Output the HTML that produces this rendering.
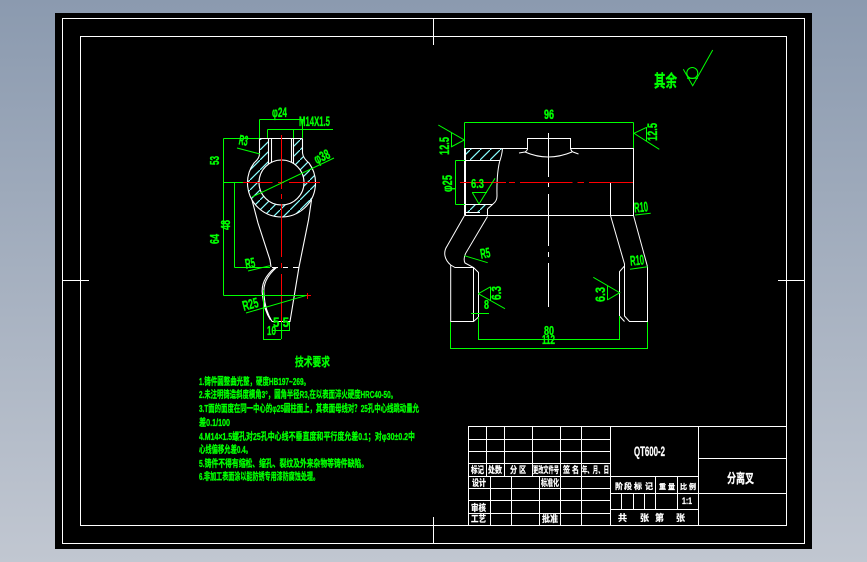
<!DOCTYPE html>
<html><head><meta charset="utf-8">
<style>
html,body{margin:0;padding:0;width:867px;height:562px;overflow:hidden;background:linear-gradient(to bottom,#8b9aaf 0%,#c1c7d1 100%)}
svg{position:absolute;left:0;top:0;display:block}
text{font-family:"Liberation Sans","Noto Sans CJK SC",sans-serif;font-weight:700}
.w path,.w line,.w rect,.w circle{stroke:#fff;fill:none}
.g path{stroke:#0f0;fill:none}
.r path{stroke:#f00;fill:none}
.gt text{fill:#0f0;stroke:#0f0;stroke-width:.3;font-size:10px}
.gl text{fill:#0f0;stroke:#0f0;stroke-width:.35;font-size:14px}
.wt text{fill:#fff;stroke:#fff;stroke-width:.25;font-size:9px}
</style></head><body>
<svg width="867" height="562" viewBox="0 0 867 562" xmlns="http://www.w3.org/2000/svg">
<defs>
<pattern id="h" patternUnits="userSpaceOnUse" width="10" height="10"><path d="M-2 12L12 -2" stroke="#8ff" stroke-width="1.2"/></pattern>
</defs>
<rect x="55" y="13" width="757" height="536" fill="#000"/>

<!-- frame -->
<g class="w" shape-rendering="crispEdges" stroke-width="1">
<rect x="62.5" y="18.5" width="742" height="525"/>
<rect x="80.5" y="36.5" width="706" height="489"/>
<path d="M62 280.5H89M778 280.5H805M433.5 18V45M433.5 517V544"/>
</g>

<!-- title block -->
<g class="w" shape-rendering="crispEdges">
<path d="M468.5 426.5H786.5M468.5 439.5H610.5M468.5 451.5H610.5M468.5 463.5H610.5M468.5 476.5H698.5M468.5 488.5H610.5M468.5 500.5H610.5M468.5 513.5H610.5M610.5 493.5H786.5M610.5 509.5H698.5M698.5 458.5H786.5"/>
<path d="M468.5 426V525M486.5 426V476M504.5 426V476M532.5 426V476M560.5 426V525M581.5 426V525M610.5 426V525M490.5 476V525M511.5 476V525M539.5 476V525M621.5 493V509M633.5 493V509M644.5 493V509M655.5 476V509M677.5 476V509M698.5 426V525"/>
</g>
<g class="wt">
<text x="471" y="473" textLength="13" lengthAdjust="spacingAndGlyphs">标记</text>
<text x="488" y="473" textLength="14" lengthAdjust="spacingAndGlyphs">处数</text>
<text x="510" y="473" textLength="16" lengthAdjust="spacingAndGlyphs">分 区</text>
<text x="533" y="473" textLength="26" lengthAdjust="spacingAndGlyphs">更改文件号</text>
<text x="563" y="473" textLength="16" lengthAdjust="spacingAndGlyphs">签 名</text>
<text x="582" y="473" textLength="27" lengthAdjust="spacingAndGlyphs">年、月、日</text>
<text x="472" y="486" textLength="14" lengthAdjust="spacingAndGlyphs">设计</text>
<text x="541" y="486" textLength="18" lengthAdjust="spacingAndGlyphs">标准化</text>
<text x="471" y="511" textLength="15" lengthAdjust="spacingAndGlyphs">审核</text>
<text x="471" y="522" textLength="15" lengthAdjust="spacingAndGlyphs">工艺</text>
<text x="542" y="522" textLength="16" lengthAdjust="spacingAndGlyphs">批准</text>
<text x="615 624 634 645" y="489" style="font-size:8px">阶段标记</text>
<text x="659 668" y="489" style="font-size:7px">重量</text>
<text x="680 689" y="489" style="font-size:7px">比例</text>
<text x="682" y="504" textLength="10" lengthAdjust="spacingAndGlyphs">1:1</text>
<text x="618" y="521">共</text><text x="640" y="521">张</text><text x="655" y="521">第</text><text x="676" y="521">张</text>
<text x="634" y="456" textLength="31" lengthAdjust="spacingAndGlyphs" style="font-size:14px">QT600-2</text>
<text x="727" y="483" textLength="27" lengthAdjust="spacingAndGlyphs" style="font-size:13px">分离叉</text>
</g>

<!-- technical text -->
<g class="gt">
<text x="295" y="366" textLength="35" lengthAdjust="spacingAndGlyphs" style="font-size:12px">技术要求</text>
<text x="199" y="385" textLength="111" lengthAdjust="spacingAndGlyphs">1.铸件圆整曲光整，硬度HB197~269。</text>
<text x="199" y="398" textLength="198" lengthAdjust="spacingAndGlyphs">2.未注明铸造斜度模角3°，圆角半径R3,在以表面淬火硬度HRC40-50。</text>
<text x="199" y="412" textLength="220" lengthAdjust="spacingAndGlyphs">3.T面的面度在同一中心的φ25圆柱面上，其表面母线对？25孔中心线跳动量允</text>
<text x="199" y="426" textLength="31" lengthAdjust="spacingAndGlyphs">差0.1/100</text>
<text x="199" y="440" textLength="216" lengthAdjust="spacingAndGlyphs">4.M14×1.5螺孔对25孔中心线不垂直度和平行度允差0.1；对φ30±0.2中</text>
<text x="199" y="453" textLength="53" lengthAdjust="spacingAndGlyphs">心线偏移允差0.4。</text>
<text x="199" y="467" textLength="169" lengthAdjust="spacingAndGlyphs">5.铸件不得有缩松、缩孔、裂纹及外来杂物等铸件缺陷。</text>
<text x="199" y="480" textLength="120" lengthAdjust="spacingAndGlyphs">6.非加工表面涂以能防锈专用漆防腐蚀处理。</text>
</g>

<!-- LEFT VIEW hatch -->
<path fill="url(#h)" fill-rule="evenodd" d="M259.5 138.5V153Q260 158 254 163A34 34 0 1 0 309 163Q303 158 302.5 153V138.5ZM268.5 138.5H294V164A22.5 22.5 0 1 1 268.5 164Z"/>
<!-- LEFT VIEW white -->
<g class="w" stroke-width="1.1">
<path d="M259.5 138.5H302.5M259.5 138.5V153Q260 158 254 163A34 34 0 1 0 309 163Q303 158 302.5 153V138.5"/>
<path d="M268.5 138.5V164M271.5 138.5V162M291.5 138.5V162M293.5 138.5V164"/>
<circle cx="281.5" cy="182.5" r="22.5"/>
<path d="M252 200L258 223L270 260L271 267M311.5 200L308.5 220L299 267L290 321.5H272"/>
<path d="M276.5 267.5Q262 280 264 295Q265 310 272 321.5M275 267.5Q260 280 262.5 295Q264 310 270.5 320"/>
<path d="M272 267.5H278M283 267.5H288M293 267.5H299"/>
</g>
<g class="r" stroke-width="1">
<path shape-rendering="crispEdges" d="M281.5 135V189M281.5 194V199M281.5 204V257M281.5 263V268M281.5 274V339M243 182.5H272.5M278 182.5H284M289 182.5H320M305 295.5H311M307.5 293V299"/>
</g>
<g class="g" stroke-width="1">
<path shape-rendering="crispEdges" d="M259.5 119.5V138M259.5 119.5H302.5V138M267.5 129.5H333M267.5 129.5V138M293.5 129.5V138M223.5 138.5H259M223.5 138.5V295.5M223.5 182.5H243M234.5 182.5V267.5M234.5 267.5H270M223.5 295.5H306M263.5 290V339.5H281M281.5 322V339M289.5 322V330.5H272"/>
<path d="M237 148L260 154M252 197L334 158M248 271L270 265.7M246 313L306.7 295.3"/>
</g>
<g class="gl">
<text x="272" y="117" textLength="15" lengthAdjust="spacingAndGlyphs">φ24</text>
<text x="299" y="126" textLength="31" lengthAdjust="spacingAndGlyphs">M14X1.5</text>
<text x="239" y="145" textLength="9" lengthAdjust="spacingAndGlyphs" transform="rotate(10 243 140)">R3</text>
<text x="313" y="162" textLength="16" lengthAdjust="spacingAndGlyphs" transform="rotate(-25 320 155)">φ38</text>
<text transform="translate(219 165) rotate(-90)" textLength="9" lengthAdjust="spacingAndGlyphs" style="font-size:13px">53</text>
<text transform="translate(230 230) rotate(-90)" textLength="10" lengthAdjust="spacingAndGlyphs" style="font-size:13px">48</text>
<text transform="translate(219 244) rotate(-90)" textLength="10" lengthAdjust="spacingAndGlyphs" style="font-size:13px">64</text>
<text x="245" y="268" textLength="10" lengthAdjust="spacingAndGlyphs" transform="rotate(-10 250 263)">R5</text>
<text x="242" y="309" textLength="16" lengthAdjust="spacingAndGlyphs" transform="rotate(-15 250 303)">R25</text>
<text x="267" y="335" textLength="9" lengthAdjust="spacingAndGlyphs" style="font-size:13px">10</text>
<text x="273" y="327" textLength="16" lengthAdjust="spacingAndGlyphs">5 5</text>
</g>

<!-- RIGHT VIEW hatch -->
<path fill="url(#h)" d="M465 148.5H502.5L500 160H465ZM465 204H493L487 209.5V212.5H465Z"/>
<g class="w" stroke-width="1">
<path shape-rendering="crispEdges" d="M464.5 148.5H527.5V138.5H570.5V148.5H633.5V215.5H464.5M465.5 148V215M464.5 148V215M465 160.5H500M465 204.5H493M465 212.5H480M487.5 209V216M610.5 182V215M548.5 133V177M548.5 183V187M548.5 194V246M548.5 252V257M548.5 263V307"/>
<path d="M519 153L525 152Q528 150 527.5 148M525 152Q548 162 572 152M570.5 148Q571 151 573 152L578.5 154"/>
<path d="M502.5 148.5Q502 155 499.5 162Q496.5 175 497 196Q497 201 493 204L487.5 209"/>
<path d="M464.5 215.5L446.7 246.7Q444 251 445 256Q446 261 450.7 265L455 267.5H473.5L478.5 272.5V317L473.5 321.5H450.7V265"/>
<path d="M487.5 216.5L465.7 253.3Q463 259 465 263L473.5 267.5V321.5"/>
<path d="M610.5 215.5L624.5 264V316L629.5 321.5H647.5V266.7L633.5 215.5M624.5 266L619.5 271.7V316L624.5 321.5"/>
</g>
<g class="r" stroke-width="1.1">
<path shape-rendering="crispEdges" d="M460 182.5H506M509 182.5H515M520 182.5H572.5M577.5 182.5H584M589 182.5H633"/>
</g>
<g class="g" stroke-width="1">
<path shape-rendering="crispEdges" d="M464.5 122.5H633.5M464.5 122.5V148M633.5 122.5V148M455.5 160.5V204.5M455.5 160.5H465M455.5 204.5H465M478.5 317V339.5H619.5V316M450.5 322V348.5H647.5V322M471 313.5H489M451.5 133V147M646.5 127V141M472 192.5H487M607.5 286V300M490.5 287V301"/>
<path d="M438.3 125L464.3 140L451 147M634 133.3L659.3 149.3M634 133.3L646.7 127.3M479 204L472.3 192.5M479 204L495 178.3M635 215L650.7 213.3M464.3 255.7L487.7 262.7M630 269.3L647.7 266.7M478.3 293.7L490.7 286.7M478.3 293.7L505 308.7M593.3 277.3L619.7 292.7L607.3 300"/>
</g>
<g class="gl">
<text x="544" y="119" textLength="10" lengthAdjust="spacingAndGlyphs">96</text>
<text transform="translate(449 155) rotate(-90)" textLength="18" lengthAdjust="spacingAndGlyphs">12.5</text>
<text transform="translate(657 141) rotate(-90)" textLength="18" lengthAdjust="spacingAndGlyphs">12.5</text>
<text transform="translate(452 192) rotate(-90)" textLength="17" lengthAdjust="spacingAndGlyphs">φ25</text>
<text x="471" y="188" textLength="13" lengthAdjust="spacingAndGlyphs" style="font-size:13px">6.3</text>
<text x="634" y="212" textLength="14" lengthAdjust="spacingAndGlyphs" transform="rotate(-5 640 207)">R10</text>
<text x="480" y="258" textLength="10" lengthAdjust="spacingAndGlyphs" transform="rotate(-10 485 252)">R5</text>
<text x="630" y="265" textLength="14" lengthAdjust="spacingAndGlyphs" transform="rotate(-5 637 260)">R10</text>
<text transform="translate(501 300) rotate(-90)" textLength="14" lengthAdjust="spacingAndGlyphs">6.3</text>
<text x="484" y="309" textLength="5" lengthAdjust="spacingAndGlyphs" style="font-size:13px">8</text>
<text transform="translate(605 302) rotate(-90)" textLength="15" lengthAdjust="spacingAndGlyphs">6.3</text>
<text x="544" y="335" textLength="10" lengthAdjust="spacingAndGlyphs" style="font-size:13px">80</text>
<text x="542" y="344" textLength="13" lengthAdjust="spacingAndGlyphs" style="font-size:13px">112</text>
</g>

<!-- 其余 -->
<g class="g" stroke-width="1">
<path d="M683.3 69.3L692.7 85.7L712.7 50M687 78.3H698"/>
<circle cx="692.3" cy="73" r="5.5" fill="none" stroke="#0f0"/>
</g>
<g class="gl"><text x="654" y="87" textLength="23" lengthAdjust="spacingAndGlyphs" style="font-size:17px">其余</text></g>
</svg>
</body></html>
